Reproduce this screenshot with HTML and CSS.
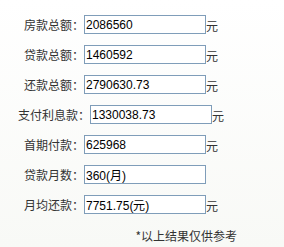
FILE: index.html
```html
<!DOCTYPE html>
<html lang="zh-CN">
<head>
    <meta charset="UTF-8">
    <meta name="viewport" content="width=device-width, initial-scale=1.0">
    <title>房贷计算结果</title>
    <link rel="stylesheet" href="styles.css">
</head>
<body>
    <div class="result">
        <div class="row">
            <span class="label">房款总额：</span>
            <input type="text" class="field" value="2086560" readonly>
            <span class="unit">元</span>
        </div>
        <div class="row">
            <span class="label">贷款总额：</span>
            <input type="text" class="field" value="1460592" readonly>
            <span class="unit">元</span>
        </div>
        <div class="row">
            <span class="label">还款总额：</span>
            <input type="text" class="field" value="2790630.73" readonly>
            <span class="unit">元</span>
        </div>
        <div class="row">
            <span class="label label-wide">支付利息款：</span>
            <input type="text" class="field" value="1330038.73" readonly>
            <span class="unit">元</span>
        </div>
        <div class="row">
            <span class="label">首期付款：</span>
            <input type="text" class="field" value="625968" readonly>
            <span class="unit">元</span>
        </div>
        <div class="row">
            <span class="label">贷款月数：</span>
            <input type="text" class="field" value="360(月)" readonly>
        </div>
        <div class="row">
            <span class="label">月均还款：</span>
            <input type="text" class="field" value="7751.75(元)" readonly>
            <span class="unit">元</span>
        </div>
        <p class="note">*以上结果仅供参考</p>
    </div>
</body>
</html>
```

FILE: styles.css
```css
body{
    margin: 0;
    background: linear-gradient(#ffffff, #f8f9f6);
    font-family: "Liberation Sans", "Noto Sans CJK SC", sans-serif;
    font-size: 12px;
    color: #333;
}
.result{
    width: 284px;
    height: 247px;
    padding-top: 15px;
    box-sizing: border-box;
}
.row{
    display: flex;
    align-items: center;
    height: 19px;
    margin-bottom: 11px;
}
.label{
    width: 84px;
    text-align: right;
    font-family: "Noto Sans CJK SC", sans-serif;
    white-space: nowrap;
}
.label-wide{
    width: 90px;
}
.field{
    width: 122px;
    height: 19px;
    box-sizing: border-box;
    margin: 0;
    padding: 0 1px;
    border: 1px solid #7f9db9;
    background: #fff;
    font-family: "Liberation Sans", sans-serif;
    font-size: 12px;
    color: #000;
    outline: none;
}
.unit{
    padding-top: 2px;
    font-family: "Noto Sans CJK SC", sans-serif;
}
.note{
    margin: 13px 0 0;
    padding-right: 47px;
    text-align: right;
    font-family: "Noto Sans CJK SC", sans-serif;
}
```
